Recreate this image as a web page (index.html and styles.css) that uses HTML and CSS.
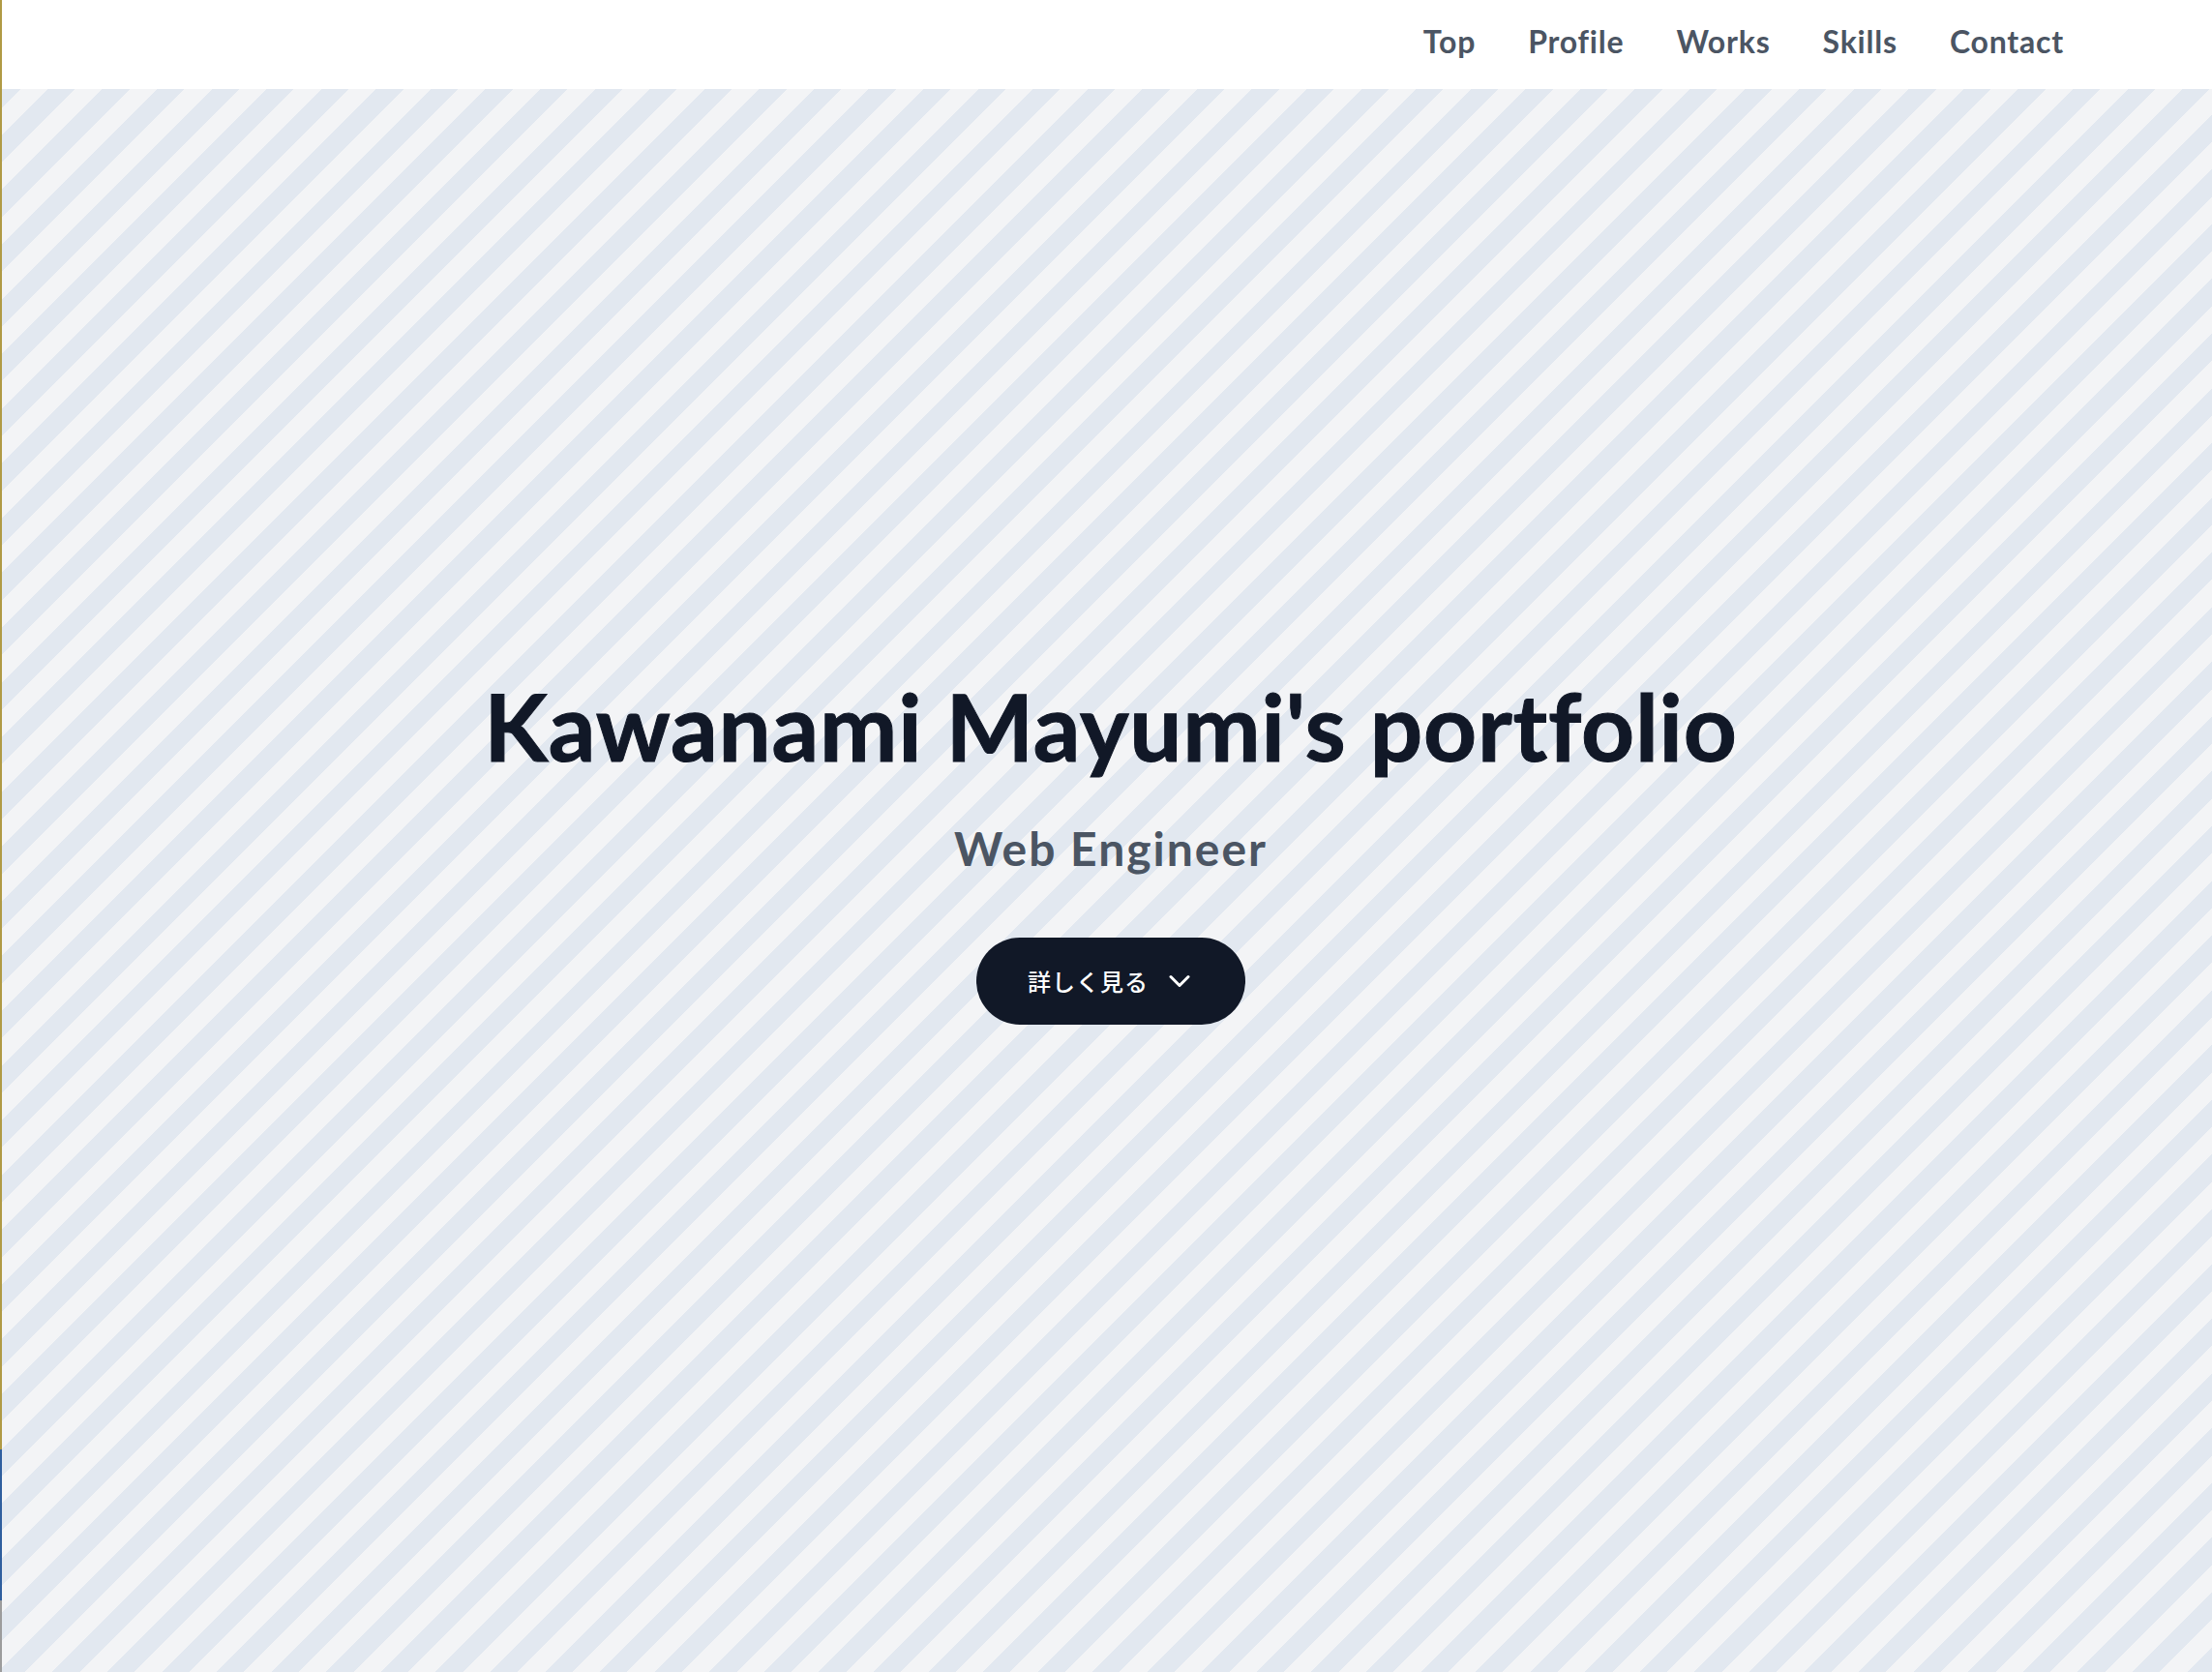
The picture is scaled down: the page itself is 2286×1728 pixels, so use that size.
FILE: index.html
```html
<!DOCTYPE html>
<html lang="ja">
<head>
<meta charset="utf-8">
<title>Kawanami Mayumi's portfolio</title>
<link rel="stylesheet" href="styles.css">
</head>
<body>
<div class="edge-line"></div>
<header class="site-header">
  <nav class="nav">
    <a class="nav-link" href="#top">Top</a>
    <a class="nav-link" href="#profile">Profile</a>
    <a class="nav-link" href="#works">Works</a>
    <a class="nav-link" href="#skills">Skills</a>
    <a class="nav-link" href="#contact">Contact</a>
  </nav>
</header>
<main class="hero" id="top">
  <div class="hero-inner">
    <h1 class="hero-title">Kawanami Mayumi's portfolio</h1>
    <p class="hero-sub">Web Engineer</p>
    <a class="hero-btn" href="#profile">
      <span class="hero-btn-text">詳しく見る</span>
      <svg class="hero-btn-icon" viewBox="0 0 24 24" width="36" height="36" fill="none" stroke="currentColor" stroke-width="2" stroke-linecap="round" stroke-linejoin="round"><path d="m6 9 6 6 6-6"/></svg>
    </a>
  </div>
</main>
</body>
</html>
```
FILE: styles.css
```css
* { box-sizing: border-box; }
html, body { margin: 0; padding: 0; }
body {
  font-family: "Lato", "Noto Sans CJK JP", sans-serif;
  background: #ffffff;
  color: #111827;
}
.edge-line {
  position: absolute;
  left: 0;
  top: 0;
  width: 2px;
  height: 1728px;
  z-index: 20;
  background: linear-gradient(to bottom, #b09a45 0, #b09a45 1498px, #2f5e9e 1498px, #2f5e9e 1654px, #9c9c9c 1654px, #9c9c9c 100%);
}
.site-header {
  position: fixed;
  top: 0;
  left: 0;
  right: 0;
  height: 92px;
  background: #ffffff;
  z-index: 10;
  display: flex;
  justify-content: flex-end;
  align-items: flex-start;
  padding: 24px 153px 0 0;
}
.nav {
  display: flex;
  gap: 54px;
}
.nav-link {
  font-family: "Lato", sans-serif;
  font-weight: 700;
  font-size: 32px;
  line-height: 1.2;
  letter-spacing: 0.8px;
  color: #4b5563;
  text-decoration: none;
}
.hero {
  height: 1728px;
  padding: 32px 0 0 10px;
  display: flex;
  align-items: center;
  justify-content: center;
  background: repeating-linear-gradient(135deg, #f3f4f6 0, #f3f4f6 20px, #e2e8f0 20px, #e2e8f0 40px);
}
.hero-inner {
  display: flex;
  flex-direction: column;
  align-items: center;
}
.hero-title {
  margin: 0;
  font-family: "Lato", sans-serif;
  font-weight: 700;
  font-size: 96px;
  line-height: 1;
  color: #111827;
  letter-spacing: 0.8px;
  -webkit-text-stroke: 1px #111827;
}
.hero-sub {
  margin: 55px 0 0;
  font-family: "Lato", sans-serif;
  font-weight: 700;
  font-size: 48px;
  line-height: 1;
  letter-spacing: 2px;
  color: #4b5563;
}
.hero-btn {
  margin-top: 68px;
  height: 90px;
  padding: 0 50px 0 53px;
  display: flex;
  align-items: center;
  gap: 14px;
  border-radius: 45px;
  background: #111827;
  color: #ffffff;
  text-decoration: none;
  white-space: nowrap;
}
.hero-btn-text {
  font-family: "Noto Sans CJK JP", sans-serif;
  font-weight: 500;
  font-size: 24px;
  line-height: 1;
  letter-spacing: 1px;
}
.hero-btn-icon {
  display: block;
  flex: none;
}
```
